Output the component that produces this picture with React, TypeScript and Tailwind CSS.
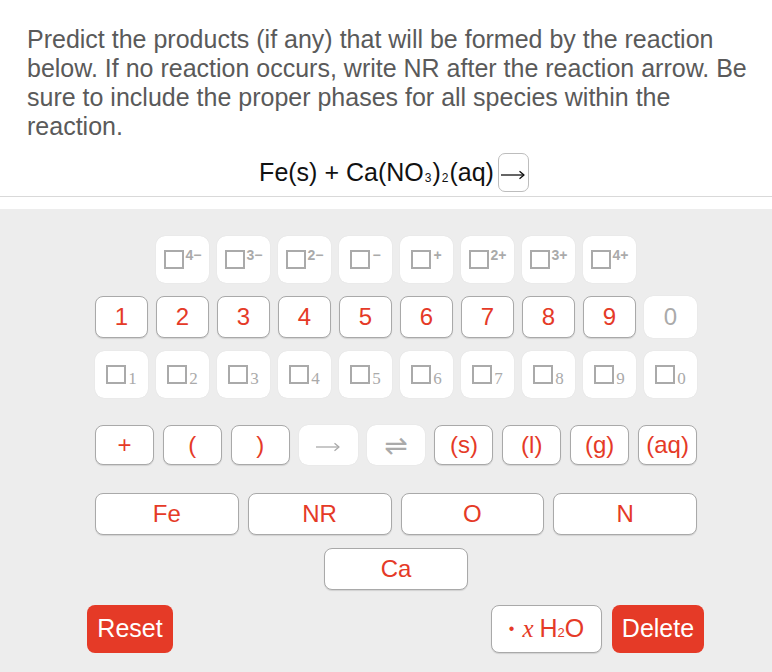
import React from 'react';

const RED = 'text-[#e53a27]';

const Key: React.FC<{ enabled?: boolean; className?: string; children: React.ReactNode }> = ({
  enabled = true,
  className = '',
  children,
}) => (
  <div
    className={
      'flex items-center justify-center bg-white ' +
      (enabled
        ? 'rounded-[8px] border border-[#a9a9a9] shadow-[0_1px_1px_rgba(0,0,0,0.12)] ' + RED
        : 'rounded-[9px] text-[#aaaaaa] shadow-[0_0_1px_rgba(0,0,0,0.12)]') +
      ' ' +
      className
    }
  >
    {children}
  </div>
);

// empty square placeholder used by the charge / subscript keys
const Box = () => <span className="inline-block w-[20px] h-[19px] border-2 border-[#aaaaaa]" />;

// thin long reaction arrow
const Arrow: React.FC<{ className?: string }> = ({ className = '' }) => (
  <svg width="24" height="10" viewBox="0 0 24 10" fill="none" stroke="currentColor" strokeWidth="1.3" className={className}>
    <path d="M0 5H23" />
    <path d="M18.5 1.2L23 5L18.5 8.8" strokeLinejoin="round" />
  </svg>
);

const charges = ['4−', '3−', '2−', '−', '+', '2+', '3+', '4+'];
const digits = ['1', '2', '3', '4', '5', '6', '7', '8', '9'];
const subs = ['1', '2', '3', '4', '5', '6', '7', '8', '9', '0'];

export default function App() {
  return (
    <div className="w-[772px] h-[672px] bg-white overflow-hidden font-['Liberation_Sans',Arial,sans-serif]">
      {/* question */}
      <div className="pl-[27px] pr-[20px] pt-[25px] text-[25px] leading-[29px] text-[#5a5a5a]">
        Predict the products (if any) that will be formed by the reaction below. If no reaction occurs, write NR after
        the reaction arrow. Be sure to include the proper phases for all species within the reaction.
      </div>

      {/* equation */}
      <div className="flex items-center justify-center mt-[12px] h-[39px] text-[25px] text-[#111] pl-[16px]">
        <span>
          Fe(s) + Ca(NO<span className="text-[12px] mx-[1px] relative top-[1px]">3</span>)
          <span className="text-[12px] mx-[1px] relative top-[1px]">2</span>(aq)
        </span>
        <span className="ml-[4px] flex items-center justify-center w-[31px] h-[39px] rounded-[7px] border border-[#bdbdbd]">
          <Arrow className="relative top-[2px] text-[#111]" />
        </span>
      </div>

      <div className="mt-[4px] border-b border-[#d9d9d9]" />

      {/* keypad */}
      <div className="mt-[12px] h-[463px] bg-[#ededed] pt-[27px]">
        <div className="ml-[95px] w-[602px]">
          <div className="grid grid-cols-10 gap-x-[8px] h-[47px]">
            {charges.map((c, i) => (
              <Key key={c} enabled={false} className={i === 0 ? 'col-start-2' : ''}>
                <Box />
                <span className="self-start mt-[12px] ml-[2px] text-[14px] font-bold leading-none">{c}</span>
              </Key>
            ))}
          </div>

          <div className="grid grid-cols-10 gap-x-[8px] h-[42px] mt-[13px] text-[24px]">
            {digits.map((d) => (
              <Key key={d}>{d}</Key>
            ))}
            <Key enabled={false}>0</Key>
          </div>

          <div className="grid grid-cols-10 gap-x-[8px] h-[47px] mt-[13px]">
            {subs.map((s) => (
              <Key key={s} enabled={false}>
                <Box />
                <span className="self-end mb-[11px] ml-[2px] text-[17px] leading-none font-['Liberation_Serif',serif]">
                  {s}
                </span>
              </Key>
            ))}
          </div>

          <div className="grid grid-cols-9 gap-x-[9px] h-[40px] mt-[27px] text-[24px]">
            <Key>+</Key>
            <Key>(</Key>
            <Key>)</Key>
            <Key enabled={false}>
              <Arrow className="relative top-[2px]" />
            </Key>
            <Key enabled={false}>
              <span className="font-['DejaVu_Sans',sans-serif] leading-none text-[28px] relative top-[1px]">⇌</span>
            </Key>
            <Key>(s)</Key>
            <Key>(l)</Key>
            <Key>(g)</Key>
            <Key>(aq)</Key>
          </div>

          <div className="grid grid-cols-4 gap-x-[9px] h-[42px] mt-[28px] text-[24px]">
            <Key>Fe</Key>
            <Key>NR</Key>
            <Key>O</Key>
            <Key>N</Key>
          </div>

          <div className="flex justify-center mt-[13px]">
            <Key className="w-[144px] h-[42px] text-[24px]">Ca</Key>
          </div>
        </div>

        <div className="ml-[87px] w-[617px] mt-[15px] flex items-center h-[48px]">
          <div className="h-full w-[86px] rounded-[8px] bg-[#e53a27] text-white text-[25px] flex items-center justify-center">
            Reset
          </div>
          <div className="flex-1" />
          <Key className="h-full w-[111px] text-[25px]">
            <span className="text-[16px] mr-[8px]">•</span>
            <span className="italic font-['Liberation_Serif',serif] mr-[6px]">x</span>
            <span>
              H<span className="text-[13px]">2</span>O
            </span>
          </Key>
          <div className="ml-[10px] h-full w-[92px] rounded-[8px] bg-[#e53a27] text-white text-[25px] flex items-center justify-center">
            Delete
          </div>
        </div>
      </div>
    </div>
  );
}
